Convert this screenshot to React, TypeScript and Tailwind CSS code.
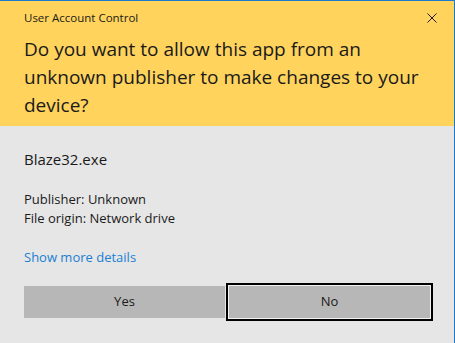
import React from 'react';

const font = { fontFamily: '"Segoe UI", "Open Sans", "Noto Sans", sans-serif' };

export default function App() {
  return (
    <div className="w-[455px] h-[343px] bg-[#e6e6e6] border-t border-r border-[#1979ca] flex flex-col text-[#1a1a1a]" style={font}>
      {/* yellow header */}
      <div className="bg-[#ffd35c] h-[125px] px-6 pt-[9px] flex flex-col">
        <div className="flex items-center justify-between h-4">
          <span className="text-[11.5px] leading-4">User Account Control</span>
          <svg width="10" height="10" viewBox="0 0 10 10" className="mr-[-7px]">
            <path d="M0.5 0.5 L9.5 9.5 M9.5 0.5 L0.5 9.5" stroke="#1a1a1a" strokeWidth="1" />
          </svg>
        </div>
        <h1 className="mt-[9px] text-[19px] leading-[28px] font-normal">
          Do you want to allow this app from an unknown publisher to make changes to your device?
        </h1>
      </div>

      {/* body */}
      <div className="flex flex-col px-6 pt-[22px]">
        <div className="text-[15px] leading-[22px]">Blaze32.exe</div>
        <div className="mt-5 text-[13px] leading-[19px]">
          <div>Publisher: Unknown</div>
          <div>File origin: Network drive</div>
        </div>
        <div className="mt-5 text-[13px] leading-[19px] text-[#1a7fd4]">Show more details</div>
        <div className="mt-[19px] flex gap-1 w-[406px]">
          <button className="flex-1 h-8 bg-[#b7b7b7] text-[13px]" style={font}>Yes</button>
          <button className="flex-1 h-8 bg-[#b7b7b7] text-[13px] shadow-[0_0_0_1px_#f2f2f2,0_0_0_3px_#000]" style={font}>No</button>
        </div>
      </div>
    </div>
  );
}
